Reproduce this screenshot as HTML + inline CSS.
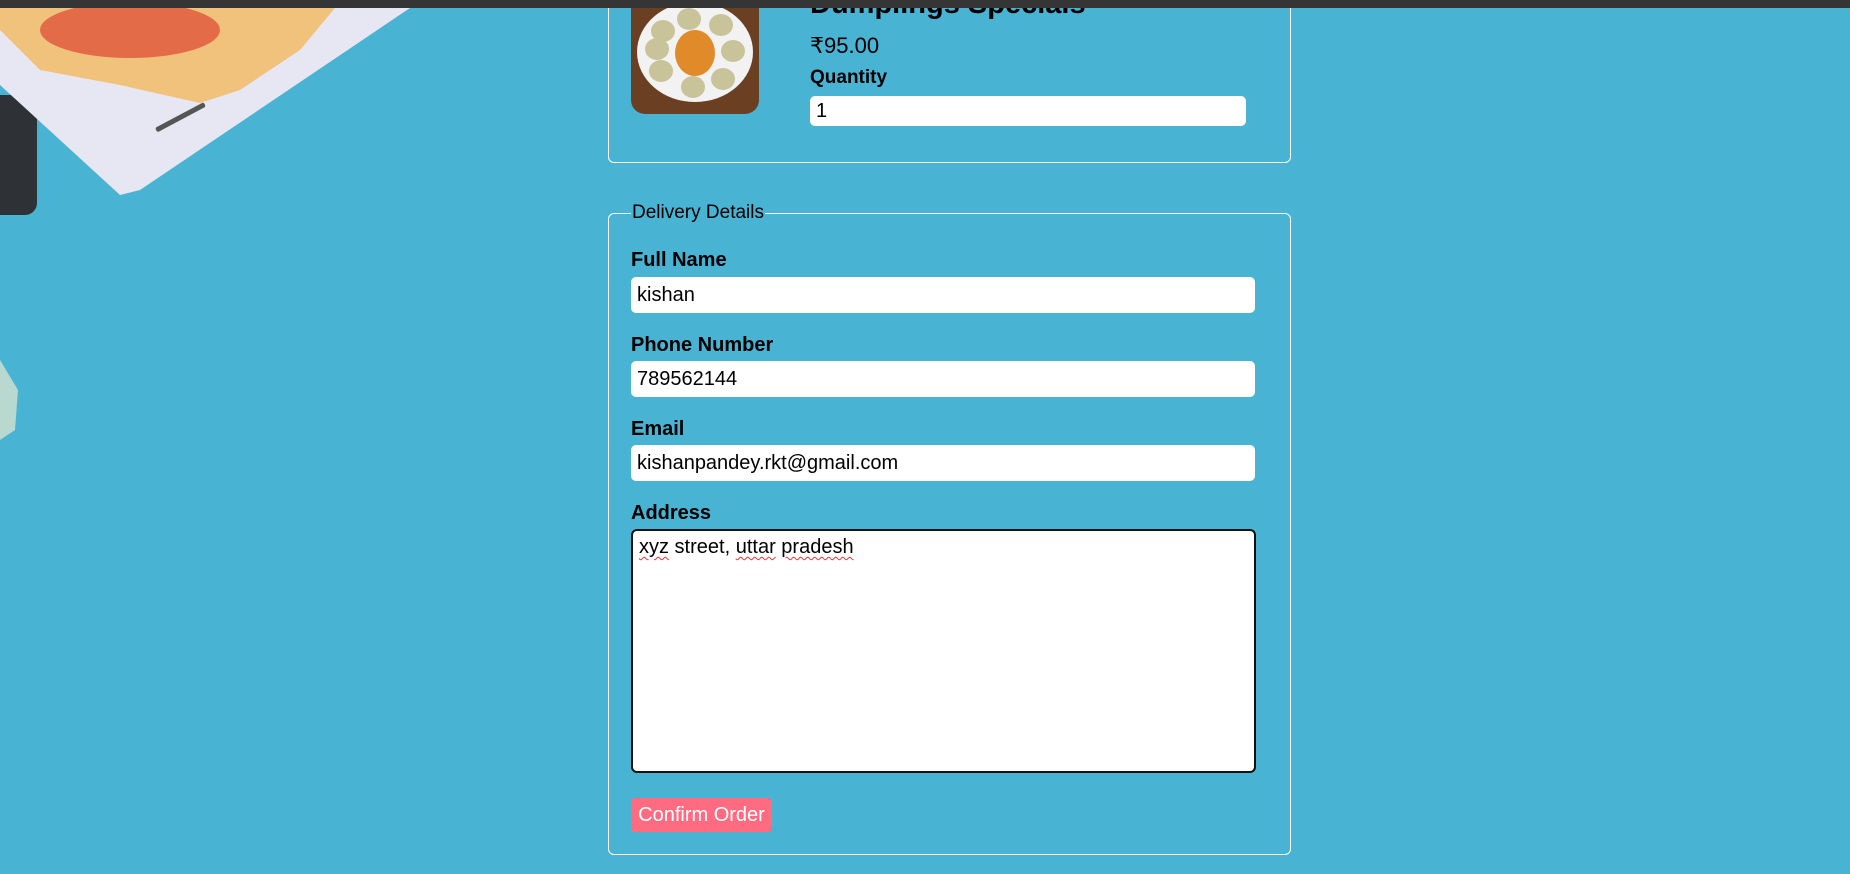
<!DOCTYPE html>
<html><head><meta charset="utf-8"><style>
*{box-sizing:border-box}
body{margin:0;width:1850px;height:874px;overflow:hidden;background:#48b3d3;font-family:"Liberation Sans",Arial,sans-serif;position:relative}
.bar{position:absolute;left:0;top:0;width:1850px;height:8px;background:#353535;z-index:5}
.card{position:absolute;left:608px;top:-40px;width:683px;height:203px;border:1px solid #fff;border-radius:6px}
.img{position:absolute;left:631px;top:-10px;width:128px;height:124px;border-radius:14px;background:#6b3f22;overflow:hidden}
.plate{position:absolute;left:6px;top:12px;width:116px;height:100px;border-radius:50%;background:#f2f2f2}
.sauce{position:absolute;left:44px;top:40px;width:40px;height:46px;border-radius:50%;background:#e08a2a}
.d{position:absolute;width:24px;height:22px;border-radius:50%;background:#c9c39a}
.title{position:absolute;left:810px;top:-12px;font-size:29px;font-weight:bold;color:#000}
.price{position:absolute;left:810px;top:33px;font-size:22px;color:#000}
.lab{position:absolute;font-size:20px;font-weight:bold;color:#000}
.in{position:absolute;background:#fff;border-radius:5px;font-size:20px;color:#000;padding-left:6px;display:flex;align-items:center}
fieldset{position:absolute;left:608px;top:202px;width:683px;height:653px;border:1px solid #fff;border-radius:6px;margin:0;padding:0}
legend{font-size:19px;color:#000;margin-left:22px;padding:0 1px}
.ta{position:absolute;left:631px;top:529px;width:625px;height:244px;background:#fff;border:2px solid #111;border-radius:6px;font-size:20px;padding:5px 6px}
.sp{text-decoration:underline wavy #e33;text-decoration-thickness:1px;text-underline-offset:3px}
.btn{position:absolute;left:631px;top:798px;width:141px;height:34px;background:#ff6b81;border-radius:4px;color:#fff;font-size:20px;display:flex;align-items:center;justify-content:center}
</style></head><body>
<div class="bar"></div>
<svg style="position:absolute;left:0;top:0" width="450" height="480">
<rect x="-20" y="95" width="57" height="120" rx="12" fill="#2e3236"/>
<polygon points="0,8 410,8 140,190 120,195 0,85" fill="#e6e7f2"/>
<polygon points="0,8 335,8 300,50 240,90 200,103 120,85 40,70 0,30" fill="#f0c27c"/>
<ellipse cx="130" cy="30" rx="90" ry="28" fill="#e0553a" opacity=".8"/>
<rect x="155" y="128" width="55" height="5" rx="2" transform="rotate(-28 155 128)" fill="#555"/>
<polygon points="0,360 18,390 15,430 0,440" fill="#b9d8cf"/>
</svg>
<div class="card"></div>
<div class="img"><div class="plate"></div><div class="sauce"></div>
<div class="d" style="left:20px;top:30px"></div><div class="d" style="left:46px;top:18px"></div><div class="d" style="left:78px;top:24px"></div><div class="d" style="left:90px;top:50px"></div><div class="d" style="left:80px;top:78px"></div><div class="d" style="left:50px;top:86px"></div><div class="d" style="left:18px;top:70px"></div><div class="d" style="left:14px;top:48px"></div></div>
<div class="title">Dumplings Specials</div>
<div class="price">₹95.00</div>
<div class="lab" style="left:810px;top:67px;font-size:19px">Quantity</div>
<div class="in" style="left:810px;top:96px;width:436px;height:30px">1</div>
<fieldset><legend>Delivery Details</legend></fieldset>
<div class="lab" style="left:631px;top:249px">Full Name</div>
<div class="in" style="left:631px;top:277px;width:624px;height:36px">kishan</div>
<div class="lab" style="left:631px;top:334px">Phone Number</div>
<div class="in" style="left:631px;top:361px;width:624px;height:36px">789562144</div>
<div class="lab" style="left:631px;top:418px">Email</div>
<div class="in" style="left:631px;top:445px;width:624px;height:36px">kishanpandey.rkt@gmail.com</div>
<div class="lab" style="left:631px;top:502px">Address</div>
<div class="ta"><span class="sp">xyz</span> street, <span class="sp">uttar</span> <span class="sp">pradesh</span></div>
<div class="btn">Confirm Order</div>
</body></html>
